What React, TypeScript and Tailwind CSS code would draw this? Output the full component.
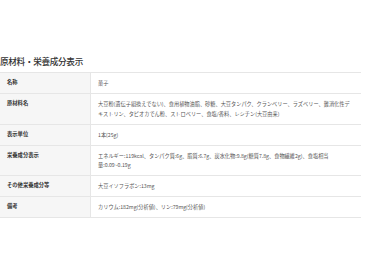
import React from 'react';

const rows: { label: string; value: string[] }[] = [
  { label: '名称', value: ['菓子'] },
  {
    label: '原材料名',
    value: [
      '大豆粉(遺伝子組換えでない)、食用植物油脂、砂糖、大豆タンパク、クランベリー、ラズベリー、難消化性デ',
      'キストリン、タピオカでん粉、ストロベリー、食塩/香料、レシチン(大豆由来)',
    ],
  },
  { label: '表示単位', value: ['1本(25g)'] },
  {
    label: '栄養成分表示',
    value: [
      'エネルギー:119kcal、タンパク質:6g、脂質:6.7g、炭水化物:9.8g(糖質7.8g、食物繊維2g)、食塩相当',
      '量:0.09~0.19g',
    ],
  },
  { label: 'その他栄養成分等', value: ['大豆イソフラボン:13mg'] },
  { label: '備考', value: ['カリウム:182mg(分析値)、リン:79mg(分析値)'] },
];

export default function App() {
  return (
    <div className="w-[365px] h-[273px] bg-white pt-[55px] font-['Noto_Sans_CJK_JP','Noto_Sans',sans-serif]">
      <h2 className="text-[8.6px] leading-[12px] font-medium text-[#333] tracking-[-0.3px]">
        原材料・栄養成分表示
      </h2>
      <div className="mt-[5px] w-[361px] border-t border-[#e6e6e6]">
        {rows.map((row) => (
          <div key={row.label} className="flex border-b border-[#e6e6e6]">
            <div className="w-[91px] shrink-0 bg-[#f6f6f6] border-r border-[#e6e6e6] px-[7px] py-[5.25px] text-[5.3px] leading-[9.5px] font-bold text-[#333]">
              {row.label}
            </div>
            <div className="flex-1 px-[7px] py-[5.25px] text-[5.2px] leading-[9.5px] text-[#555]">
              {row.value.map((line) => (
                <div key={line} className="whitespace-nowrap">
                  {line}
                </div>
              ))}
            </div>
          </div>
        ))}
      </div>
    </div>
  );
}
